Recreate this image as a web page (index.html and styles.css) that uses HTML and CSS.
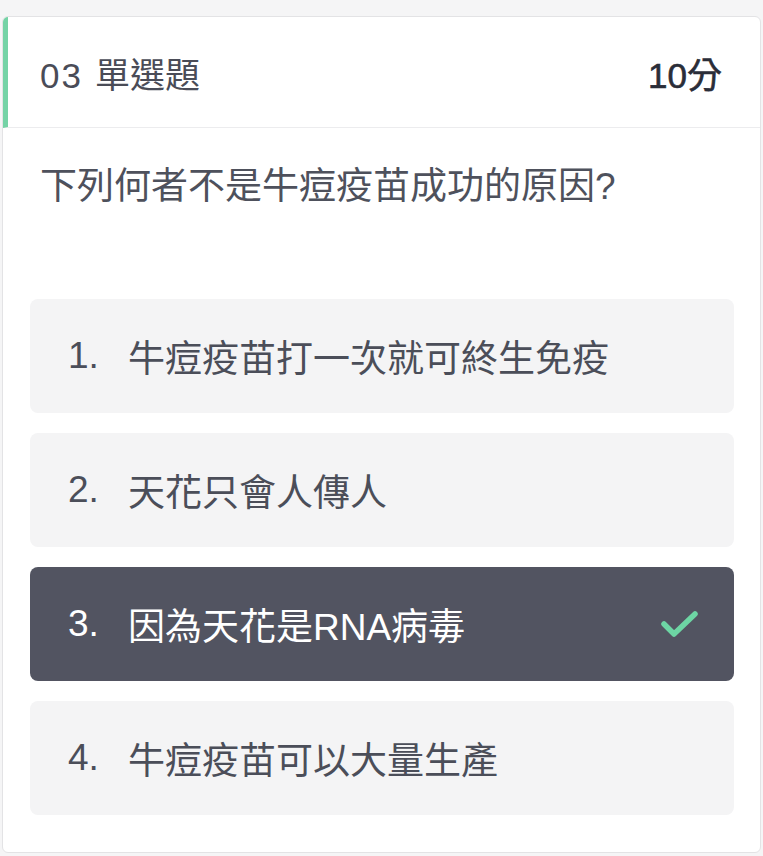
FILE: index.html
```html
<!DOCTYPE html>
<html lang="zh-Hant">
<head>
<meta charset="utf-8">
<link rel="stylesheet" href="styles.css">
</head>
<body>
<div class="page">
  <section class="card">
    <header class="card-head">
      <span class="q-title"><span class="q-no">03</span>單選題</span>
      <span class="q-score">10分</span>
    </header>
    <div class="card-body">
      <p class="question">下列何者不是牛痘疫苗成功的原因?</p>
      <ul class="options">
        <li class="option"><span class="num">1.</span><span class="txt">牛痘疫苗打一次就可終生免疫</span></li>
        <li class="option"><span class="num">2.</span><span class="txt">天花只會人傳人</span></li>
        <li class="option selected"><span class="num">3.</span><span class="txt">因為天花是RNA病毒</span>
          <svg class="check" width="40" height="30" viewBox="0 0 40 30"><path d="M4 15 L14 25 L35 5" fill="none" stroke="#6dd5a4" stroke-width="5.5" stroke-linecap="round" stroke-linejoin="round"/></svg>
        </li>
        <li class="option"><span class="num">4.</span><span class="txt">牛痘疫苗可以大量生產</span></li>
      </ul>
    </div>
  </section>
</div>
</body>
</html>
```

FILE: styles.css
```css
* { box-sizing: border-box; }
html, body { margin: 0; padding: 0; }
body {
  background: #f5f5f6;
  font-family: "Liberation Sans", "Noto Sans CJK TC", sans-serif;
  width: 763px;
  height: 856px;
  overflow: hidden;
}
.page {
  padding: 16px 2px 0 2px;
}
.card {
  background: #fff;
  border: 1px solid #e3e3e5;
  border-radius: 6px;
  height: 837px;
  overflow: hidden;
}
.card-head {
  height: 111px;
  display: flex;
  align-items: center;
  justify-content: space-between;
  padding: 0 38px 0 32px;
  border-left: 5px solid #75d3a6;
  border-bottom: 1px solid #ececee;
}
.q-title {
  font-size: 35px;
  color: #4a4c57;
}
.q-no {
  letter-spacing: 2px;
  margin-right: 12px;
}
.q-score {
  font-size: 35px;
  color: #2a2d38;
  -webkit-text-stroke: 0.6px #2a2d38;
}
.card-body {
  padding: 0 26px 0 27px;
}
.question {
  margin: 0;
  padding-top: 37px;
  height: 171px;
  font-size: 37px;
  color: #4e515c;
  line-height: 44px;
  padding-left: 10px;
}
.options {
  list-style: none;
  margin: 0;
  padding: 0;
  display: flex;
  flex-direction: column;
  gap: 20px;
}
.option {
  height: 114px;
  background: #f4f4f5;
  border-radius: 8px;
  display: flex;
  align-items: center;
  padding-left: 38px;
  padding-right: 34px;
  color: #4b4e59;
  font-size: 37px;
}
.num {
  width: 60px;
  flex: none;
}
.txt {
  flex: 1;
}
.option.selected {
  background: #525461;
  color: #fff;
}
.check { flex: none; }
```
